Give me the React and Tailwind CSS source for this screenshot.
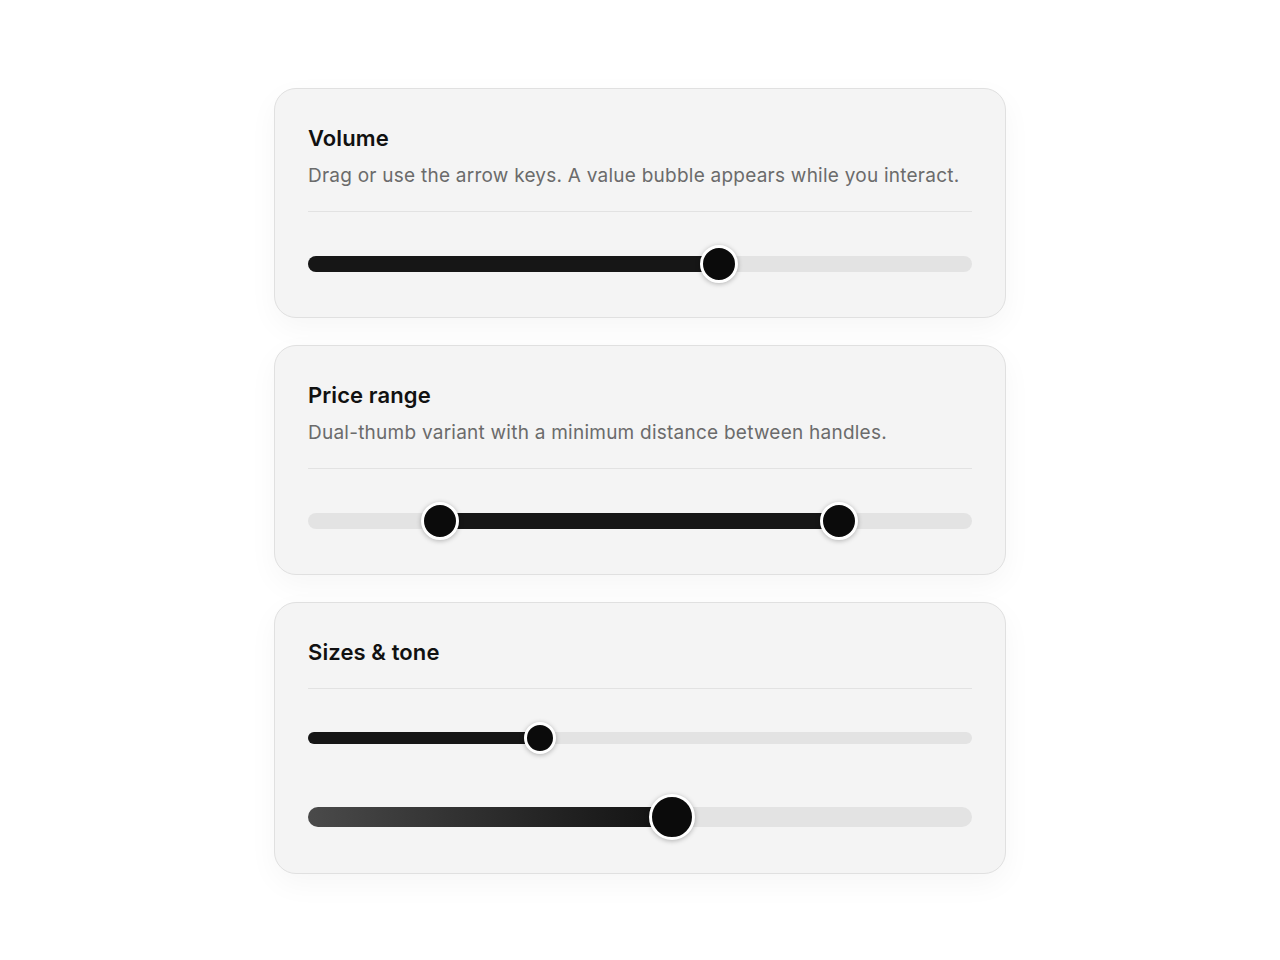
import React from "react";

function Thumb({ left, size }) {
  return (
    <div
      className="absolute top-1/2 -translate-x-1/2 -translate-y-1/2 rounded-full bg-[#0b0b0b] border-[3px] border-white shadow-[0_1px_5px_rgba(0,0,0,0.28)]"
      style={{ left: left, width: size, height: size }}
    />
  );
}

function Slider({ height, trackH, thumb, from = 0, to, thumbs, gradient }) {
  return (
    <div className="relative w-full" style={{ height }}>
      <div
        className="absolute left-0 right-0 top-1/2 -translate-y-1/2 rounded-full bg-[#e3e3e3]"
        style={{ height: trackH }}
      />
      <div
        className={
          "absolute top-1/2 -translate-y-1/2 " +
          (from === 0 ? "rounded-l-full " : "") +
          (gradient
            ? "bg-gradient-to-r from-[#4a4a4a] to-[#121212]"
            : "bg-[#161616]")
        }
        style={{ left: from, width: to - from, height: trackH }}
      />
      {thumbs.map((t, i) => (
        <Thumb key={i} left={t} size={thumb} />
      ))}
    </div>
  );
}

function Card({ children }) {
  return (
    <div className="w-[732px] rounded-[22px] border border-[#e0e0e0] bg-[#f4f4f4] px-[33px] pt-[34px] shadow-[0_10px_30px_rgba(0,0,0,0.04)]">
      {children}
    </div>
  );
}

export default function App() {
  return (
    <div
      className="min-h-[960px] w-full bg-white flex flex-col items-center pt-[88px] gap-[27px]"
      style={{ fontFamily: "Inter, 'Noto Sans', sans-serif" }}
    >
      <Card>
        <h2 className="text-[22px] leading-[30px] font-semibold text-[#111] tracking-[0.1px]">Volume</h2>
        <p className="mt-[9px] text-[19px] leading-[28px] text-[#6b6b6b] tracking-[0.24px]">
          Drag or use the arrow keys. A value bubble appears while you interact.
        </p>
        <div className="mt-[21px] h-px bg-[#e2e2e2]" />
        <div className="mt-[33px] pb-[34px]">
          <Slider height={38} trackH={16} thumb={38} to={411} thumbs={[411]} />
        </div>
      </Card>

      <Card>
        <h2 className="text-[22px] leading-[30px] font-semibold text-[#111] tracking-[0.1px]">Price range</h2>
        <p className="mt-[9px] text-[19px] leading-[28px] text-[#6b6b6b] tracking-[0.24px]">
          Dual-thumb variant with a minimum distance between handles.
        </p>
        <div className="mt-[21px] h-px bg-[#e2e2e2]" />
        <div className="mt-[33px] pb-[34px]">
          <Slider height={38} trackH={16} thumb={38} from={132} to={531} thumbs={[132, 531]} />
        </div>
      </Card>

      <Card>
        <h2 className="text-[22px] leading-[30px] font-semibold text-[#111] tracking-[0.1px]">Sizes &amp; tone</h2>
        <div className="mt-[21px] h-px bg-[#e2e2e2]" />
        <div className="mt-[33px]">
          <Slider height={32} trackH={12} thumb={32} to={232} thumbs={[232]} />
        </div>
        <div className="mt-[40px] pb-[33px]">
          <Slider height={46} trackH={20} thumb={46} to={364} thumbs={[364]} gradient />
        </div>
      </Card>
    </div>
  );
}
